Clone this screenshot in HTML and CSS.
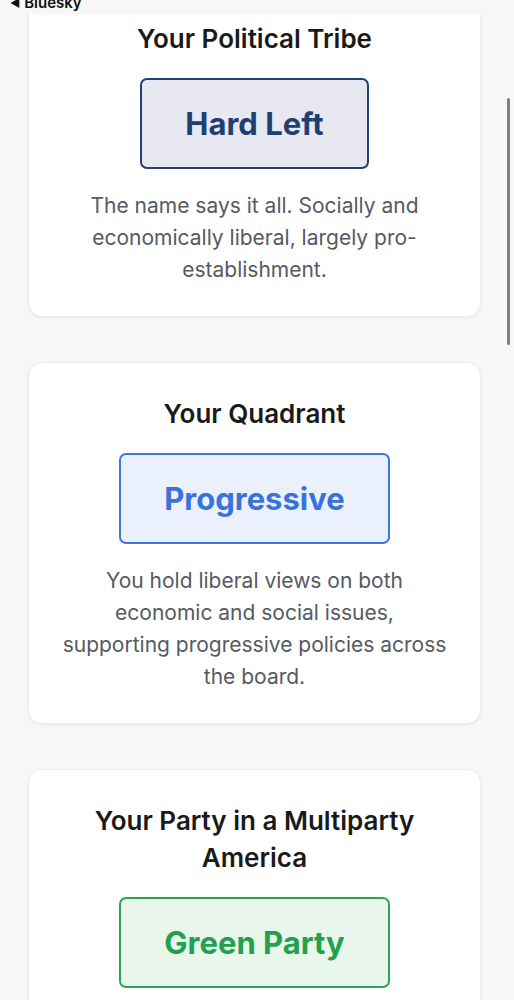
FILE: index.html
```html
<!DOCTYPE html>
<html lang="en">
<head>
<meta charset="utf-8">
<title>Results</title>
<link rel="stylesheet" href="styles.css">
</head>
<body>
<div class="statusbar"><span class="back">&#9664;</span> Bluesky</div>
<div class="scrollbar"></div>
<main class="results">
  <section class="card">
    <h2 class="card-title">Your Political Tribe</h2>
    <div class="badge badge-navy">Hard Left</div>
    <p class="desc">The name says it all. Socially and economically liberal, largely pro-establishment.</p>
  </section>
  <section class="card">
    <h2 class="card-title">Your Quadrant</h2>
    <div class="badge badge-blue">Progressive</div>
    <p class="desc">You hold liberal views on both economic and social issues, supporting progressive policies across the board.</p>
  </section>
  <section class="card">
    <h2 class="card-title">Your Party in a Multiparty America</h2>
    <div class="badge badge-green">Green Party</div>
    <p class="desc">A party focused on environmental protection and social justice.</p>
  </section>
</main>
</body>
</html>
```
FILE: styles.css
```css
html, body {
  margin: 0;
  padding: 0;
  background: #f7f7f7;
  font-family: Inter, "Noto Sans", "Liberation Sans", sans-serif;
}
.statusbar {
  position: fixed;
  top: 0;
  left: 0;
  right: 0;
  height: 14px;
  background: #f7f7f7;
  z-index: 10;
  font-size: 15px;
  font-weight: 600;
  color: #111;
  line-height: 5px;
  padding-left: 10px;
  overflow: hidden;
}
.statusbar .back {
  font-size: 11px;
  vertical-align: 1px;
}
.scrollbar {
  position: fixed;
  right: 4px;
  top: 98px;
  width: 3px;
  height: 247px;
  border-radius: 2px;
  background: #7f7f7f;
  z-index: 11;
}
.results {
  display: flex;
  flex-direction: column;
  gap: 45px;
  padding: 0 33px 40px 28px;
  margin-top: -13px;
}
.card {
  background: #fff;
  border: 1px solid #ececec;
  border-radius: 14px;
  box-shadow: 0 1px 3px rgba(0,0,0,0.06);
  padding: 32px 30px 30px;
  display: flex;
  flex-direction: column;
  align-items: center;
  text-align: center;
}
.card-title {
  margin: 0;
  font-size: 26px;
  line-height: 37px;
  font-weight: 600;
  color: #1a1a1a;
}
.badge {
  margin-top: 21px;
  padding: 25px 43px;
  border: 2px solid;
  border-radius: 7px;
  font-size: 31px;
  line-height: 37px;
  font-weight: 700;
}
.badge-navy {
  color: #223f74;
  border-color: #253f70;
  background: #e8e9f0;
}
.badge-blue {
  color: #3a72d9;
  border-color: #3d77dc;
  background: #eaf0fc;
}
.badge-green {
  color: #21a150;
  border-color: #2aa659;
  background: #e8f6ec;
}
.desc {
  margin: 21px 0 0;
  font-size: 21px;
  line-height: 32px;
  color: #555a63;
}
```
